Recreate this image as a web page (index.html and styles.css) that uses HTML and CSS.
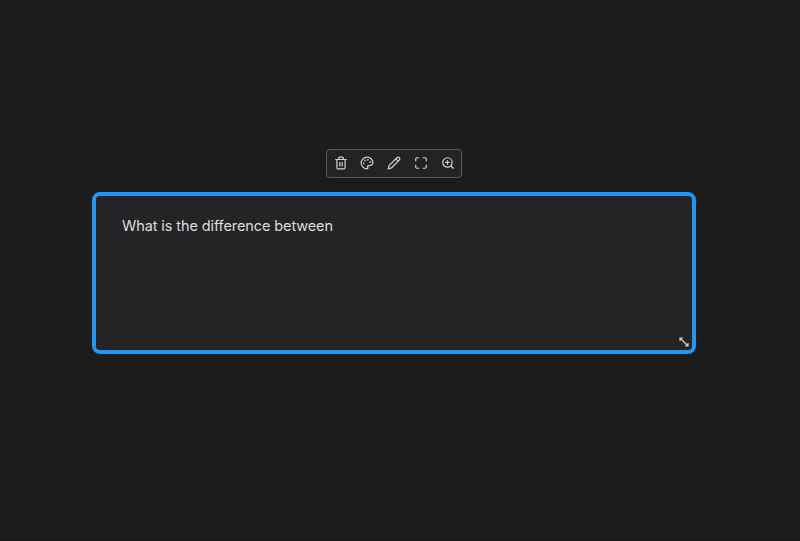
FILE: index.html
```html
<!DOCTYPE html>
<html lang="en">
<head>
<meta charset="utf-8">
<title>Canvas</title>
<link rel="stylesheet" href="styles.css">
</head>
<body>
<main class="canvas">
  <div class="toolbar">
    <svg class="icon" viewBox="0 0 24 24"><path d="M3 6h18M19 6v14a2 2 0 0 1-2 2H7a2 2 0 0 1-2-2V6M8 6V4a2 2 0 0 1 2-2h4a2 2 0 0 1 2 2v2M10 11v6M14 11v6"/></svg>
    <svg class="icon" viewBox="0 0 24 24"><g class="dots"><circle cx="13.5" cy="6.5" r=".5"/><circle cx="17.5" cy="10.5" r=".5"/><circle cx="8.5" cy="7.5" r=".5"/><circle cx="6.5" cy="12.5" r=".5"/></g><path d="M12 2C6.5 2 2 6.5 2 12s4.5 10 10 10c.93 0 1.65-.75 1.65-1.69 0-.44-.18-.83-.44-1.12-.29-.29-.44-.65-.44-1.13a1.64 1.64 0 0 1 1.67-1.67h2c3.05 0 5.55-2.5 5.55-5.55C21.97 6.01 17.46 2 12 2z"/></svg>
    <svg class="icon" viewBox="0 0 24 24"><path d="M17 3a2.83 2.83 0 1 1 4 4L7.5 20.5 2 22l1.5-5.5ZM15 5l4 4"/></svg>
    <svg class="icon" viewBox="0 0 24 24"><path d="M8 3H5a2 2 0 0 0-2 2v3M21 8V5a2 2 0 0 0-2-2h-3M3 16v3a2 2 0 0 0 2 2h3M16 21h3a2 2 0 0 0 2-2v-3"/></svg>
    <svg class="icon" viewBox="0 0 24 24"><circle cx="11" cy="11" r="8"/><path d="m21 21-4.35-4.35M11 8v6M8 11h6"/></svg>
  </div>
  <section class="card">
    <p class="text">What is the difference between</p>
    <svg class="resize" viewBox="0 0 10 10"><path d="M1 4V1h3M1 1l8 8M9 6v3H6"/></svg>
  </section>
</main>
</body>
</html>
```
FILE: styles.css
```css
body {
  margin: 0;
  background: #1c1c1c;
  font-family: Inter, "Liberation Sans", sans-serif;
}

.canvas {
  box-sizing: border-box;
  height: 541px;
  padding: 149px 104px 0 92px;
  display: flex;
  flex-direction: column;
  align-items: center;
  gap: 14px;
  border-bottom: 2px solid #181617;
}

.toolbar {
  box-sizing: border-box;
  width: 136px;
  height: 28.5px;
  padding: 0 6.5px;
  display: flex;
  align-items: center;
  justify-content: space-between;
  border: 1px solid #5a5a5c;
  border-radius: 4px;
  background: #232325;
}

.icon {
  width: 14px;
  height: 14px;
  fill: none;
  stroke: #d2d2d2;
  stroke-width: 2.1;
  stroke-linecap: round;
  stroke-linejoin: round;
}

.dots {
  fill: #d2d2d2;
}

.card {
  box-sizing: border-box;
  position: relative;
  width: 604px;
  height: 162.5px;
  padding: 20px 26px;
  border: 4px solid #2196f3;
  border-radius: 8px;
  background: #242426;
}

.text {
  margin: 0;
  color: #dedede;
  font-size: 14.5px;
  line-height: 20px;
  letter-spacing: -0.1px;
  font-variant-ligatures: none;
}

.resize {
  position: absolute;
  right: 3.5px;
  bottom: 3px;
  width: 10px;
  height: 10px;
  fill: none;
  stroke: #d0d0d0;
  stroke-width: 1.2;
}
```
